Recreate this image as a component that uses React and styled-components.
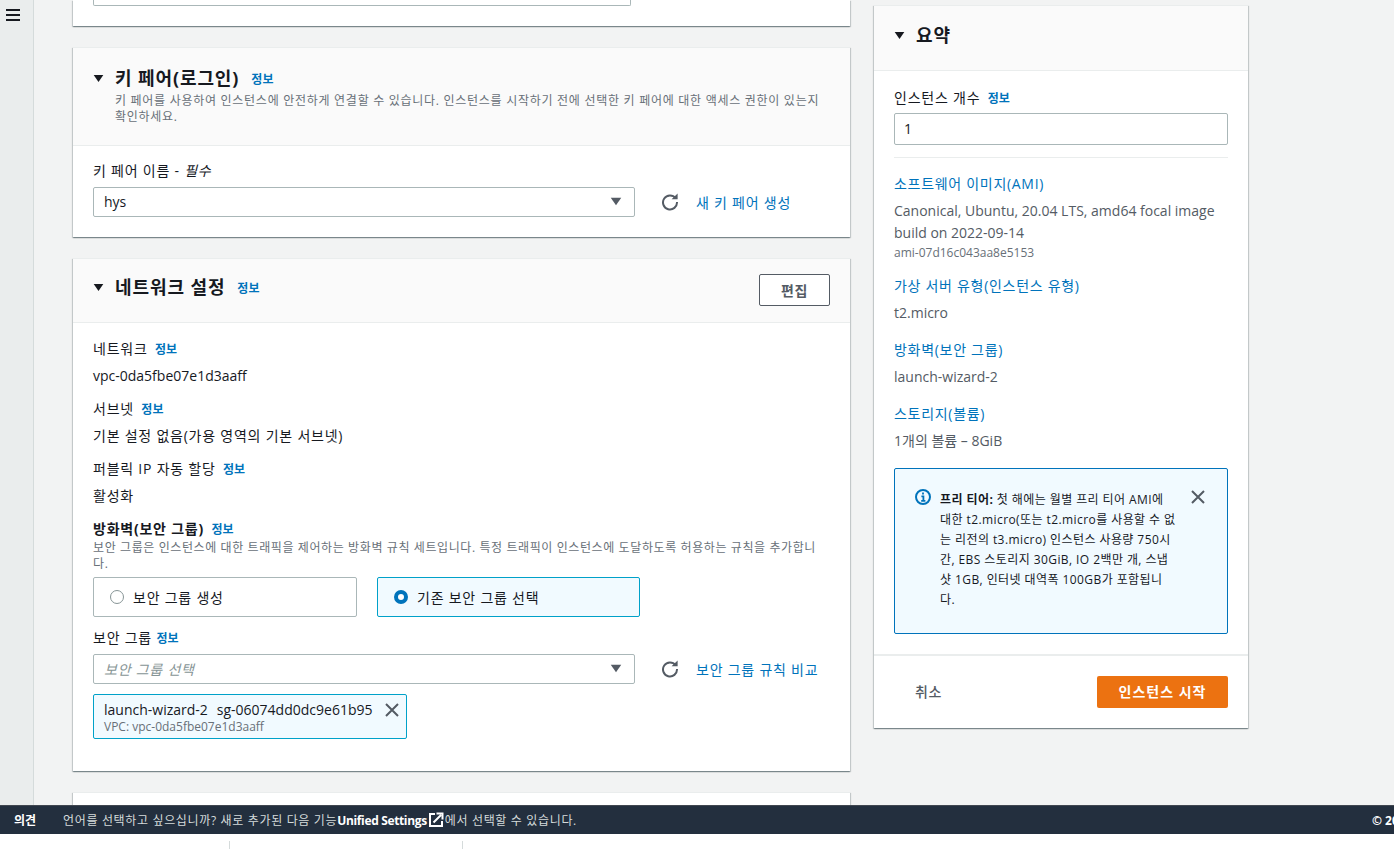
import styled, { createGlobalStyle } from "styled-components";
import { useState } from "react";

const GlobalStyle = createGlobalStyle`
    html, body {
        margin: 0;
        height: 100%;
        overflow: hidden;
        background: #fff;
        font-family: "Open Sans", "Noto Sans CJK KR", sans-serif;
        font-size: 14px;
        color: #16191f;
    }
    * { box-sizing: border-box; }
`

const Caret = () => (
    <CaretIcon viewBox="0 0 16 12"><path d="M1 1h14L8 11z" fill="currentColor" /></CaretIcon>
)

const Refresh = () => (
    <RefreshIcon viewBox="0 0 18 18" fill="none">
        <path d="M14.6 5.2A7 7 0 1 0 16 9" stroke="#545b64" strokeWidth="2" />
        <path d="M10.6 6.2h6V.6z" fill="#545b64" />
    </RefreshIcon>
)

const Close = ({ size = 16, $flat }) => (
    <CloseIcon $flat={$flat} width={size} height={size} viewBox="0 0 16 16" fill="none">
        <path d="M2 2l12 12M14 2L2 14" stroke="#545b64" strokeWidth="2" />
    </CloseIcon>
)

const Select = ({ value, placeholder }) => (
    <SelectBox>
        {placeholder ? <Placeholder>{placeholder}</Placeholder> : <span>{value}</span>}
        <SelectCaret><Caret /></SelectCaret>
    </SelectBox>
)

const App = () => {
    const [count] = useState("1")

    return (
        <>
            <GlobalStyle />
            <Shell>
                <Sidebar>
                    <svg width="14" height="12" viewBox="0 0 14 12">
                        <path d="M0 1h14M0 6h14M0 11h14" stroke="#16191f" strokeWidth="2" />
                    </svg>
                </Sidebar>
                <Content>
                    <LeftColumn>
                        <CutCard><CutInput /></CutCard>

                        <Card>
                            <CardHeader>
                                <TitleRow>
                                    <HeadCaret><Caret /></HeadCaret>
                                    <Title>키 페어(로그인)</Title>
                                    <Info>정보</Info>
                                </TitleRow>
                                <HeaderDesc>
                                    키 페어를 사용하여 인스턴스에 안전하게 연결할 수 있습니다. 인스턴스를 시작하기 전에 선택한 키 페어에 대한 액세스 권한이 있는지 확인하세요.
                                </HeaderDesc>
                            </CardHeader>
                            <KeyBody>
                                <Label>키 페어 이름 - <em>필수</em></Label>
                                <SelectRow>
                                    <Select value="hys" />
                                    <Refresh />
                                    <ActionLink>새 키 페어 생성</ActionLink>
                                </SelectRow>
                            </KeyBody>
                        </Card>

                        <Card>
                            <NetworkHeader>
                                <TitleRow>
                                    <HeadCaret><Caret /></HeadCaret>
                                    <Title>네트워크 설정</Title>
                                    <Info>정보</Info>
                                </TitleRow>
                                <EditButton>편집</EditButton>
                            </NetworkHeader>
                            <NetworkBody>
                                <Field>
                                    <Label>네트워크 <Info>정보</Info></Label>
                                    <Value>vpc-0da5fbe07e1d3aaff</Value>
                                </Field>
                                <Field>
                                    <Label>서브넷 <Info>정보</Info></Label>
                                    <Value $ko>기본 설정 없음(가용 영역의 기본 서브넷)</Value>
                                </Field>
                                <Field>
                                    <Label>퍼블릭 IP 자동 할당 <Info>정보</Info></Label>
                                    <Value $ko>활성화</Value>
                                </Field>
                                <FirewallLabel>방화벽(보안 그룹) <Info>정보</Info></FirewallLabel>
                                <FirewallDesc>
                                    보안 그룹은 인스턴스에 대한 트래픽을 제어하는 방화벽 규칙 세트입니다. 특정 트래픽이 인스턴스에 도달하도록 허용하는 규칙을 추가합니다.
                                </FirewallDesc>
                                <RadioRow>
                                    <RadioCard>
                                        <RadioDot />
                                        보안 그룹 생성
                                    </RadioCard>
                                    <RadioCard $checked>
                                        <RadioDot $checked />
                                        기존 보안 그룹 선택
                                    </RadioCard>
                                </RadioRow>
                                <GroupLabel>보안 그룹 <Info>정보</Info></GroupLabel>
                                <SelectRow $tight>
                                    <Select placeholder="보안 그룹 선택" />
                                    <Refresh />
                                    <ActionLink>보안 그룹 규칙 비교</ActionLink>
                                </SelectRow>
                                <Token>
                                    <div>
                                        <TokenName>launch-wizard-2<span>sg-06074dd0dc9e61b95</span></TokenName>
                                        <TokenSub>VPC: vpc-0da5fbe07e1d3aaff</TokenSub>
                                    </div>
                                    <Close />
                                </Token>
                            </NetworkBody>
                        </Card>

                        <Card />
                    </LeftColumn>

                    <Summary>
                        <SummaryHeader>
                            <HeadCaret><Caret /></HeadCaret>
                            <Title>요약</Title>
                        </SummaryHeader>
                        <SummaryBody>
                            <Label>인스턴스 개수 <Info>정보</Info></Label>
                            <CountInput>{count}</CountInput>
                            <Divider />
                            <SummaryLink>소프트웨어 이미지(AMI)</SummaryLink>
                            <SummaryText>Canonical, Ubuntu, 20.04 LTS, amd64 focal image build on 2022-09-14</SummaryText>
                            <SummarySmall>ami-07d16c043aa8e5153</SummarySmall>
                            <SummaryLink $gap>가상 서버 유형(인스턴스 유형)</SummaryLink>
                            <SummaryText>t2.micro</SummaryText>
                            <SummaryLink $gap>방화벽(보안 그룹)</SummaryLink>
                            <SummaryText>launch-wizard-2</SummaryText>
                            <SummaryLink $gap>스토리지(볼륨)</SummaryLink>
                            <SummaryText>1개의 볼륨 – 8GiB</SummaryText>
                            <Notice>
                                <svg width="16" height="16" viewBox="0 0 16 16" fill="none">
                                    <circle cx="8" cy="8" r="7" stroke="#0073bb" strokeWidth="2" />
                                    <path d="M8 3.6v2M6.4 7.4H8.4V11.6M6.2 11.8h4.2" stroke="#0073bb" strokeWidth="1.8" />
                                </svg>
                                <NoticeText>
                                    <strong>프리 티어:</strong> 첫 해에는 월별 프리 티어 AMI에<br />
                                    대한 t2.micro(또는 t2.micro를 사용할 수 없<br />
                                    는 리전의 t3.micro) 인스턴스 사용량 750시<br />
                                    간, EBS 스토리지 30GiB, IO 2백만 개, 스냅<br />
                                    샷 1GB, 인터넷 대역폭 100GB가 포함됩니<br />
                                    다.
                                </NoticeText>
                                <Close $flat />
                            </Notice>
                        </SummaryBody>
                        <SummaryFooter>
                            <Cancel>취소</Cancel>
                            <StartButton>인스턴스 시작</StartButton>
                        </SummaryFooter>
                    </Summary>
                </Content>
            </Shell>
            <Footer>
                <Feedback>의견</Feedback>
                <FooterText>
                    언어를 선택하고 싶으십니까? 새로 추가된 다음 기능<b>Unified Settings</b>
                    <svg width="16" height="16" viewBox="0 0 16 16" fill="none">
                        <path d="M7 2H2v12h12V9" stroke="#fff" strokeWidth="2" />
                        <path d="M5.5 10.5L13 3M8.5 1.5h6v6" stroke="#fff" strokeWidth="2" />
                    </svg>
                    에서 선택할 수 있습니다.
                </FooterText>
                <Copyright>© 2008 - 2022, Amazon Web Services, Inc.</Copyright>
            </Footer>
            <BottomStrip>
                <StripCell $w={230} />
                <StripCell $w={233} />
            </BottomStrip>
        </>
    )
}

export default App;

const Shell = styled.div`
    display: flex;
    height: 805px;
    overflow: hidden;
    background: #f2f3f3;
`
const Sidebar = styled.aside`
    flex: 0 0 34px;
    background: #eaeded;
    border-right: 1px solid #d5dbdb;
    padding: 9px 0 0 6px;
    svg { display: block; }
`
const Content = styled.main`
    flex: 1;
    display: flex;
    align-items: flex-start;
    gap: 24px;
    padding-left: 39px;
`
const LeftColumn = styled.div`
    flex: 0 0 777px;
    display: flex;
    flex-direction: column;
    gap: 21px;
`
const Card = styled.section`
    background: #fff;
    border-top: 1px solid #eaeded;
    box-shadow: 0 1px 1px 0 rgba(0, 28, 36, .3), 1px 1px 1px 0 rgba(0, 28, 36, .15), -1px 1px 1px 0 rgba(0, 28, 36, .15);
    min-height: 60px;
`
const CutCard = styled(Card)`
    border-top: 0;
    min-height: 0;
    height: 26px;
    padding: 0 0 0 20px;
`
const CutInput = styled.div`
    width: 538px;
    height: 6px;
    border: 1px solid #aab7b8;
    border-top: 0;
    border-radius: 0 0 2px 2px;
`
const CardHeader = styled.header`
    background: #fafafa;
    border-bottom: 1px solid #eaeded;
    height: 98px;
    padding: 17px 20px 0;
`
const NetworkHeader = styled(CardHeader)`
    height: 64px;
    display: flex;
    justify-content: space-between;
    align-items: flex-start;
    padding-top: 15px;
`
const TitleRow = styled.div`
    display: flex;
    align-items: center;
    height: 26px;
    a { margin-top: 2px; }
`
const HeadCaret = styled.span`
    display: flex;
    width: 22px;
    color: #16191f;
    svg { width: 11px; height: 9px; }
`
const CaretIcon = styled.svg`
    display: block;
`
const Title = styled.h2`
    margin: 0 9px 0 0;
    font-size: 18px;
    line-height: 26px;
    font-weight: 700;
    letter-spacing: .05em;
    color: #16191f;
`
const Info = styled.a`
    color: #0073bb;
    font-size: 12px;
    font-weight: 700;
    font-style: normal;
    letter-spacing: 0;
    margin-left: 3px;
`
const HeaderDesc = styled.p`
    margin: 2px 0 0 22px;
    font-size: 12px;
    line-height: 16px;
    letter-spacing: .06em;
    color: #687078;
    width: 710px;
`
const KeyBody = styled.div`
    padding: 14px 20px 20px;
`
const Label = styled.div`
    font-size: 14px;
    line-height: 22px;
    letter-spacing: .055em;
    color: #16191f;
    em { font-style: italic; }
`
const SelectRow = styled.div`
    display: flex;
    align-items: center;
    margin-top: ${p => p.$tight ? "4px" : "5px"};
`
const SelectBox = styled.div`
    flex: 0 0 542px;
    height: 30px;
    border: 1px solid #aab7b8;
    border-radius: 2px;
    background: #fff;
    display: flex;
    align-items: center;
    justify-content: space-between;
    padding: 0 12px 1px 10px;
    color: #16191f;
`
const Placeholder = styled.span`
    color: #879596;
    font-style: italic;
    letter-spacing: .055em;
`
const SelectCaret = styled.span`
    display: flex;
    color: #545b64;
    svg { width: 12px; height: 9px; }
`
const RefreshIcon = styled.svg`
    flex: 0 0 18px;
    width: 18px;
    height: 18px;
    margin: 0 17px 0 26px;
`
const ActionLink = styled.a`
    color: #0073bb;
    font-size: 14px;
    letter-spacing: .055em;
    white-space: nowrap;
`
const EditButton = styled.button`
    width: 71px;
    height: 32px;
    background: #fff;
    border: 1px solid #545b64;
    border-radius: 2px;
    font: inherit;
    font-weight: 700;
    letter-spacing: .05em;
    color: #545b64;
`
const NetworkBody = styled.div`
    padding: 15px 20px 32px;
`
const Field = styled.div`
    margin-bottom: 11px;
`
const Value = styled.div`
    margin-top: 4px;
    line-height: 22px;
    letter-spacing: ${p => p.$ko ? ".055em" : "0"};
    color: #16191f;
`
const FirewallLabel = styled(Label)`
    font-weight: 700;
    line-height: 20px;
    margin-top: 12px;
`
const FirewallDesc = styled.p`
    margin: 0;
    font-size: 12px;
    line-height: 16px;
    letter-spacing: .05em;
    color: #687078;
`
const RadioRow = styled.div`
    display: flex;
    gap: 20px;
    margin-top: 5px;
`
const RadioCard = styled.div`
    width: ${p => p.$checked ? "263px" : "264px"};
    height: 40px;
    display: flex;
    align-items: center;
    gap: 9px;
    padding-left: 16px;
    letter-spacing: .055em;
    border: 1px solid ${p => p.$checked ? "#00a1c9" : "#aab7b8"};
    border-radius: 2px;
    background: ${p => p.$checked ? "#f1faff" : "#fff"};
`
const RadioDot = styled.span`
    width: 14px;
    height: 14px;
    border-radius: 50%;
    background: #fff;
    border: ${p => p.$checked ? "4px solid #0073bb" : "1px solid #879596"};
`
const GroupLabel = styled(Label)`
    margin-top: 10px;
    a { margin-left: 0; }
`
const Token = styled.div`
    width: 314px;
    height: 45px;
    margin-top: 10px;
    display: flex;
    justify-content: space-between;
    padding: 4px 6px 0 10px;
    border: 1px solid #00a1c9;
    border-radius: 2px;
    background: #f1faff;
`
const TokenName = styled.div`
    line-height: 21px;
    span { margin-left: 9px; }
`
const TokenSub = styled.div`
    font-size: 12px;
    line-height: 14px;
    color: #687078;
`
const CloseIcon = styled.svg`
    flex: none;
    margin-top: ${p => p.$flat ? "0" : "3px"};
    margin-left: ${p => p.$flat ? "auto" : "0"};
`
const Summary = styled.aside`
    flex: 0 0 374px;
    margin-top: 5px;
    background: #fff;
    border-top: 1px solid #eaeded;
    box-shadow: 0 1px 1px 0 rgba(0, 28, 36, .3), 1px 1px 1px 0 rgba(0, 28, 36, .15), -1px 1px 1px 0 rgba(0, 28, 36, .15);
`
const SummaryHeader = styled.header`
    height: 65px;
    background: #fafafa;
    border-bottom: 1px solid #eaeded;
    display: flex;
    align-items: center;
    padding: 0 20px 6px;
`
const SummaryBody = styled.div`
    padding: 16px 20px 20px;
`
const CountInput = styled.div`
    height: 32px;
    margin-top: 3px;
    border: 1px solid #aab7b8;
    border-radius: 2px;
    padding: 0 9px;
    line-height: 30px;
`
const Divider = styled.hr`
    border: 0;
    border-top: 1px solid #eaeded;
    margin: 12px 0 15px;
`
const SummaryLink = styled.a`
    display: block;
    color: #0073bb;
    line-height: 22px;
    letter-spacing: .05em;
    margin-top: ${p => p.$gap ? "15px" : "0"};
`
const SummaryText = styled.div`
    margin-top: 5px;
    line-height: 22px;
    color: #545b64;
`
const SummarySmall = styled.div`
    margin-top: 1px;
    font-size: 12px;
    line-height: 15px;
    color: #687078;
`
const Notice = styled.div`
    display: flex;
    align-items: flex-start;
    gap: 9px;
    height: 166px;
    margin-top: 16px;
    padding: 20px 21px 0 20px;
    border: 1px solid #0073bb;
    border-radius: 2px;
    background: #f1faff;
`
const NoticeText = styled.p`
    margin: 1px 0 0;
    flex: 0 0 229px;
    font-size: 12px;
    line-height: 20px;
    letter-spacing: .035em;
    white-space: nowrap;
    color: #16191f;
    strong { font-weight: 700; }
`
const SummaryFooter = styled.footer`
    height: 74px;
    padding: 0 20px 0 41px;
    border-top: 2px solid #eaeded;
    display: flex;
    align-items: center;
    justify-content: space-between;
`
const Cancel = styled.a`
    font-weight: 500;
    color: #545b64;
    letter-spacing: .05em;
    margin-bottom: 3px;
`
const StartButton = styled.button`
    width: 131px;
    height: 32px;
    padding: 0 0 2px;
    border: 0;
    border-radius: 2px;
    background: #ec7211;
    color: #fff;
    font: inherit;
    font-weight: 700;
    letter-spacing: .07em;
`
const Footer = styled.footer`
    height: 29px;
    background: #232f3e;
    border-top: 1px solid #414750;
    display: flex;
    align-items: center;
    padding-left: 14px;
    font-size: 12px;
    color: #d5dbdb;
    white-space: nowrap;
    position: relative;
    overflow: hidden;
`
const Feedback = styled.a`
    width: 49px;
    color: #fff;
    font-weight: 700;
`
const FooterText = styled.div`
    display: flex;
    align-items: center;
    letter-spacing: .055em;
    b { color: #fff; letter-spacing: -.35px; }
    svg { margin: 0 1px; }
`
const Copyright = styled.span`
    position: absolute;
    left: 1372px;
    color: #fff;
    font-weight: 700;
`
const BottomStrip = styled.div`
    display: flex;
    height: 15px;
    background: #fff;
    padding-top: 7px;
`
const StripCell = styled.div`
    width: ${p => p.$w}px;
    border-right: 1px solid #d5dbdb;
`
